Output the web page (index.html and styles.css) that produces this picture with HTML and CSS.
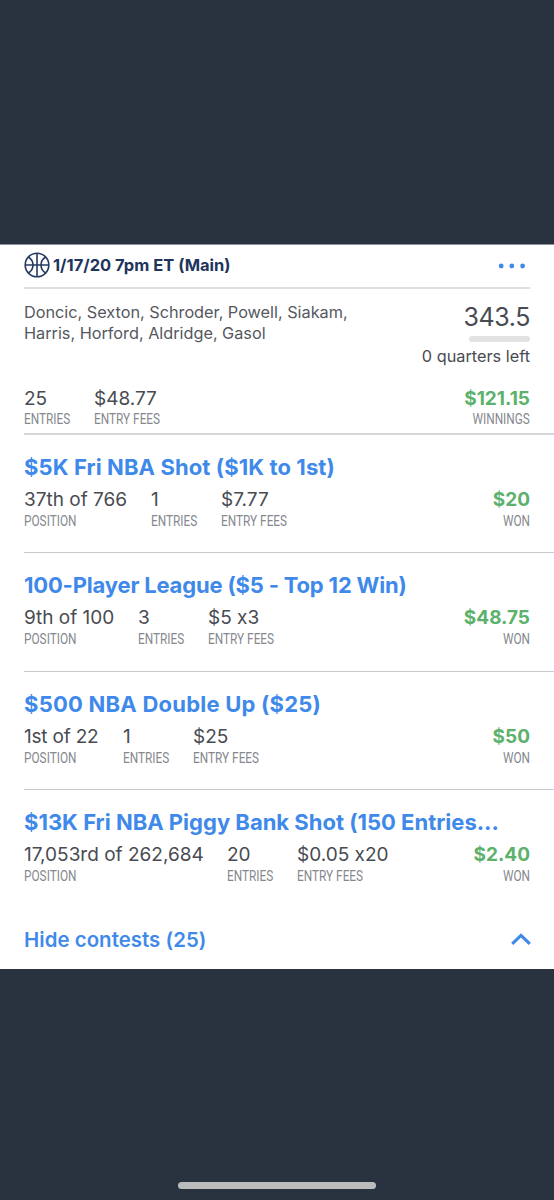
FILE: index.html
```html
<!DOCTYPE html>
<html lang="en">
<head>
<meta charset="utf-8">
<title>Contests</title>
<link rel="stylesheet" href="styles.css">
</head>
<body>
<main class="card">
  <header class="head">
    <svg class="ball" viewBox="0 0 26 26" fill="none" stroke="#253a61" stroke-width="1.6">
      <circle cx="13" cy="13" r="11.8"/>
      <path d="M13 1.2v23.6M1.2 13h23.6"/>
      <path d="M4.3 5Q9 7.8 9 13T4.3 21M21.7 5Q17 7.8 17 13T21.7 21"/>
    </svg>
    <h1 class="slate">1/17/20 7pm ET (Main)</h1>
    <svg class="dots" viewBox="0 0 28 6" fill="#3f89ea"><circle cx="3.2" cy="3" r="2.4"/><circle cx="13.8" cy="3" r="2.4"/><circle cx="24.6" cy="3" r="2.4"/></svg>
  </header>
  <section class="summary">
    <p class="lineup">Doncic, Sexton, Schroder, Powell, Siakam,<br>Harris, Horford, Aldridge, Gasol</p>
    <div class="score">
      <span class="points">343.5</span>
      <span class="bar"></span>
      <span class="left">0 quarters left</span>
    </div>
  </section>
  <section class="stats totals">
    <div class="stat"><span class="value">25</span><span class="label entries">ENTRIES</span></div>
    <div class="stat"><span class="value">$48.77</span><span class="label fees">ENTRY FEES</span></div>
    <div class="stat end"><span class="value win">$121.15</span><span class="label">WINNINGS</span></div>
  </section>
  <article class="contest">
    <h2 class="title t1">$5K Fri NBA Shot ($1K to 1st)</h2>
    <div class="stats">
      <div class="stat p1"><span class="value">37th of 766</span><span class="label">POSITION</span></div>
      <div class="stat"><span class="value">1</span><span class="label entries">ENTRIES</span></div>
      <div class="stat"><span class="value">$7.77</span><span class="label fees">ENTRY FEES</span></div>
      <div class="stat end"><span class="value win">$20</span><span class="label">WON</span></div>
    </div>
  </article>
  <article class="contest">
    <h2 class="title t2">100-Player League ($5 - Top 12 Win)</h2>
    <div class="stats">
      <div class="stat p2"><span class="value">9th of 100</span><span class="label">POSITION</span></div>
      <div class="stat"><span class="value">3</span><span class="label entries">ENTRIES</span></div>
      <div class="stat"><span class="value">$5 x3</span><span class="label fees">ENTRY FEES</span></div>
      <div class="stat end"><span class="value win">$48.75</span><span class="label">WON</span></div>
    </div>
  </article>
  <article class="contest">
    <h2 class="title t3">$500 NBA Double Up ($25)</h2>
    <div class="stats">
      <div class="stat p3"><span class="value">1st of 22</span><span class="label">POSITION</span></div>
      <div class="stat"><span class="value">1</span><span class="label entries">ENTRIES</span></div>
      <div class="stat"><span class="value">$25</span><span class="label fees">ENTRY FEES</span></div>
      <div class="stat end"><span class="value win">$50</span><span class="label">WON</span></div>
    </div>
  </article>
  <article class="contest">
    <h2 class="title t4">$13K Fri NBA Piggy Bank Shot (150 Entries...</h2>
    <div class="stats">
      <div class="stat p4"><span class="value">17,053rd of 262,684</span><span class="label">POSITION</span></div>
      <div class="stat"><span class="value">20</span><span class="label entries">ENTRIES</span></div>
      <div class="stat"><span class="value">$0.05 x20</span><span class="label fees">ENTRY FEES</span></div>
      <div class="stat end"><span class="value win">$2.40</span><span class="label">WON</span></div>
    </div>
  </article>
  <footer class="toggle">
    <span>Hide contests (25)</span>
    <svg class="chevron" viewBox="0 0 20 12" fill="none" stroke="#3f89ea" stroke-width="3.1"><path d="M1.2 10.8 10 2.3l8.8 8.5"/></svg>
  </footer>
</main>
<div class="home"></div>
</body>
</html>
```
FILE: styles.css
```css
* { box-sizing: border-box; margin: 0; padding: 0; }
body {
  height: 1200px;
  padding-top: 244px;
  background: #29333f;
  display: flex;
  flex-direction: column;
  font-family: "Inter", "Liberation Sans", sans-serif;
  font-feature-settings: "calt" 0;
  color: #484b52;
  overflow: hidden;
}
.card { height: 725px; background: #fff; border-top: 1px solid #8b929a; padding-left: 24px; }
.head { height: 44px; padding-bottom: 2px; margin-right: 24px; display: flex; align-items: center; border-bottom: 2px solid #dcdee1; }
.ball { width: 26px; height: 26px; margin-right: 3px; flex: none; }
.slate { font-size: 16.5px; font-weight: 700; color: #20345c; white-space: nowrap; }
.dots { width: 28px; height: 6px; margin: 1px 4px 0 auto; }
.summary { height: 94px; padding-right: 24px; display: flex; justify-content: space-between; }
.lineup { padding-top: 13px; font-size: 16.3px; line-height: 21px; letter-spacing: -.02px; color: #55585e; white-space: nowrap; }
.score { display: flex; flex-direction: column; align-items: flex-end; }
.points { margin-top: 13px; font-size: 25px; line-height: 30px; letter-spacing: -.4px; }
.bar { width: 61px; height: 6px; margin-top: 4px; border-radius: 3px; background: #e2e2e2; }
.left { margin-top: 4px; font-size: 16.3px; line-height: 20px; }
.stats { display: flex; gap: 24px; padding-right: 24px; }
.totals { height: 52px; padding-top: 5px; border-bottom: 2px solid #d4d6da; }
.stat { display: flex; flex-direction: column; white-space: nowrap; flex: none; }
.value { font-size: 19px; line-height: 22px; }
.win { font-weight: 700; color: #5cb16c; }
.label {
  font: 14px/18px "Roboto", sans-serif;
  color: #85888e;
  transform: scaleX(.845);
  transform-origin: left;
}
.entries { width: 46px; }
.fees { width: 67px; }
.end { margin-left: auto; align-items: flex-end; }
.end .label { transform-origin: right; }
.contest { height: 118.3px; padding-top: 19px; border-bottom: 1px solid #c8cad0; }
.contest:nth-of-type(4) { border-bottom: 0; }
.contest .value { line-height: 23px; }
.contest .label { line-height: 20px; }
.title { margin-bottom: 7px; font-size: 22px; line-height: 27px; font-weight: 700; color: #3f89ea; white-space: nowrap; }
.t1 { letter-spacing: .1px; }
.t2 { letter-spacing: -.18px; }
.t3 { letter-spacing: .23px; }
.p1 { width: 103px; }
.p2 { width: 90px; }
.p3 { width: 75px; letter-spacing: -.2px; }
.p3 .label { letter-spacing: 0; }
.p4 { width: 179px; }
.toggle { margin-top: 4px; height: 54px; padding-right: 23px; display: flex; align-items: center; justify-content: space-between; font-size: 20.4px; font-weight: 600; letter-spacing: .05px; color: #3f89ea; }
.chevron { width: 20px; height: 12px; }
.home { width: 198px; height: 7px; margin: 213px 0 0 178px; border-radius: 4px; background: #bbbdbd; }
```
